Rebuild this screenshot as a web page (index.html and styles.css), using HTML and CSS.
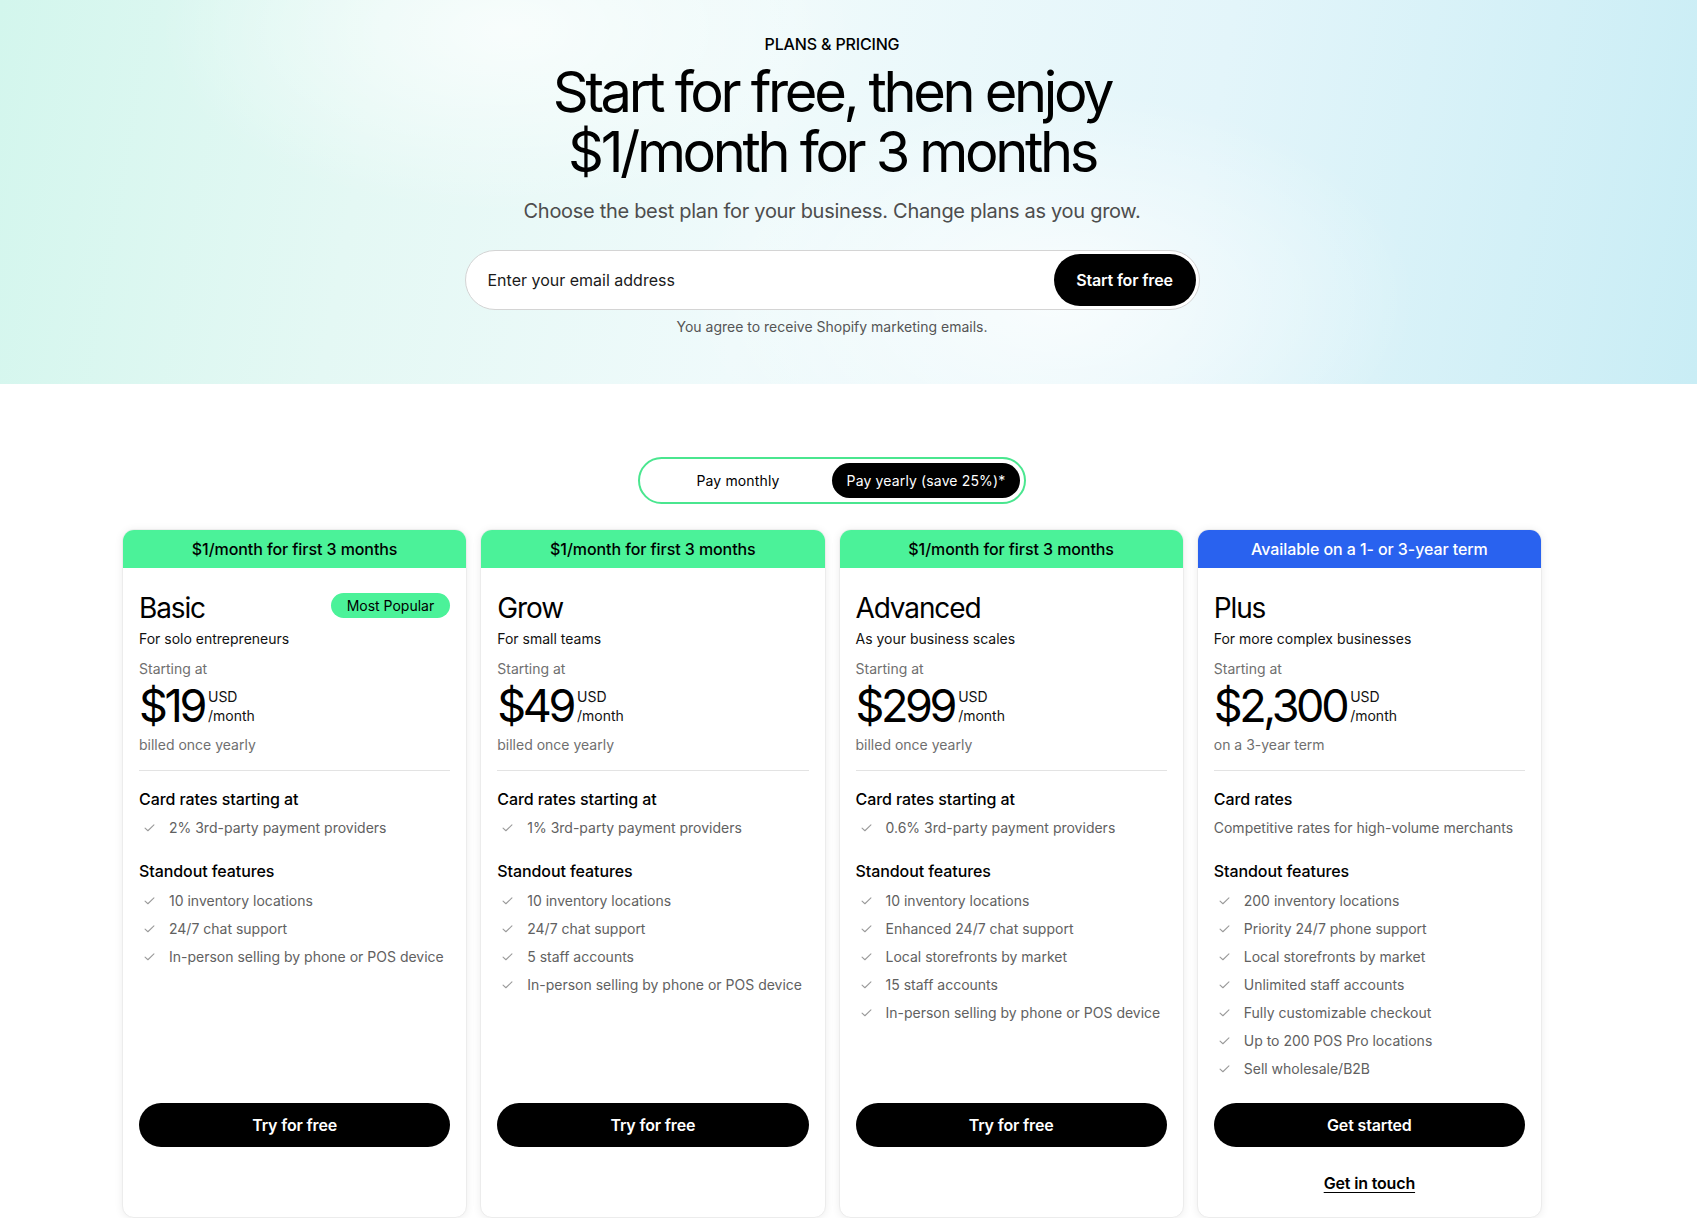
FILE: index.html
```html
<!DOCTYPE html>
<html lang="en">
<head>
<meta charset="utf-8">
<title>Plans &amp; Pricing</title>
<link rel="stylesheet" href="styles.css">
</head>
<body>
<header class="hero">
  <div class="hero-inner">
    <p class="eyebrow">PLANS &amp; PRICING</p>
    <h1 class="headline">Start for free, then enjoy<br>$1/month for 3 months</h1>
    <p class="lede">Choose the best plan for your business. Change plans as you grow.</p>
    <form class="signup">
      <input class="signup-input" type="email" placeholder="Enter your email address">
      <button class="signup-btn" type="button">Start for free</button>
    </form>
    <p class="consent">You agree to receive Shopify marketing emails.</p>
  </div>
</header>

<main class="plans">
  <div class="plans-inner">
    <div class="toggle">
      <span class="toggle-opt">Pay monthly</span>
      <span class="toggle-opt is-active">Pay yearly (save 25%)*</span>
    </div>

    <div class="cards">
      <article class="card">
        <div class="band">$1/month for first 3 months</div>
        <div class="card-body">
          <div class="title-row"><h2 class="plan-name">Basic</h2><span class="badge">Most Popular</span></div>
          <p class="plan-for">For solo entrepreneurs</p>
          <p class="muted">Starting at</p>
          <div class="price-row"><span class="price">$19</span><span class="unit"><span>USD</span><span>/month</span></span></div>
          <p class="muted billed">billed once yearly</p>
          <hr class="divider">
          <h3 class="sec">Card rates starting at</h3>
          <ul class="list">
            <li><svg class="chk" viewBox="0 0 12 9"><path d="M1 4.6 4.2 7.6 11 1"/></svg>2% 3rd-party payment providers</li>
          </ul>
          <h3 class="sec sec-2">Standout features</h3>
          <ul class="list">
            <li><svg class="chk" viewBox="0 0 12 9"><path d="M1 4.6 4.2 7.6 11 1"/></svg>10 inventory locations</li>
            <li><svg class="chk" viewBox="0 0 12 9"><path d="M1 4.6 4.2 7.6 11 1"/></svg>24/7 chat support</li>
            <li><svg class="chk" viewBox="0 0 12 9"><path d="M1 4.6 4.2 7.6 11 1"/></svg>In-person selling by phone or POS device</li>
          </ul>
          <div class="actions"><a class="cta" href="#">Try for free</a></div>
        </div>
      </article>

      <article class="card">
        <div class="band">$1/month for first 3 months</div>
        <div class="card-body">
          <div class="title-row"><h2 class="plan-name">Grow</h2></div>
          <p class="plan-for">For small teams</p>
          <p class="muted">Starting at</p>
          <div class="price-row"><span class="price">$49</span><span class="unit"><span>USD</span><span>/month</span></span></div>
          <p class="muted billed">billed once yearly</p>
          <hr class="divider">
          <h3 class="sec">Card rates starting at</h3>
          <ul class="list">
            <li><svg class="chk" viewBox="0 0 12 9"><path d="M1 4.6 4.2 7.6 11 1"/></svg>1% 3rd-party payment providers</li>
          </ul>
          <h3 class="sec sec-2">Standout features</h3>
          <ul class="list">
            <li><svg class="chk" viewBox="0 0 12 9"><path d="M1 4.6 4.2 7.6 11 1"/></svg>10 inventory locations</li>
            <li><svg class="chk" viewBox="0 0 12 9"><path d="M1 4.6 4.2 7.6 11 1"/></svg>24/7 chat support</li>
            <li><svg class="chk" viewBox="0 0 12 9"><path d="M1 4.6 4.2 7.6 11 1"/></svg>5 staff accounts</li>
            <li><svg class="chk" viewBox="0 0 12 9"><path d="M1 4.6 4.2 7.6 11 1"/></svg>In-person selling by phone or POS device</li>
          </ul>
          <div class="actions"><a class="cta" href="#">Try for free</a></div>
        </div>
      </article>

      <article class="card">
        <div class="band">$1/month for first 3 months</div>
        <div class="card-body">
          <div class="title-row"><h2 class="plan-name">Advanced</h2></div>
          <p class="plan-for">As your business scales</p>
          <p class="muted">Starting at</p>
          <div class="price-row"><span class="price">$299</span><span class="unit"><span>USD</span><span>/month</span></span></div>
          <p class="muted billed">billed once yearly</p>
          <hr class="divider">
          <h3 class="sec">Card rates starting at</h3>
          <ul class="list">
            <li><svg class="chk" viewBox="0 0 12 9"><path d="M1 4.6 4.2 7.6 11 1"/></svg>0.6% 3rd-party payment providers</li>
          </ul>
          <h3 class="sec sec-2">Standout features</h3>
          <ul class="list">
            <li><svg class="chk" viewBox="0 0 12 9"><path d="M1 4.6 4.2 7.6 11 1"/></svg>10 inventory locations</li>
            <li><svg class="chk" viewBox="0 0 12 9"><path d="M1 4.6 4.2 7.6 11 1"/></svg>Enhanced 24/7 chat support</li>
            <li><svg class="chk" viewBox="0 0 12 9"><path d="M1 4.6 4.2 7.6 11 1"/></svg>Local storefronts by market</li>
            <li><svg class="chk" viewBox="0 0 12 9"><path d="M1 4.6 4.2 7.6 11 1"/></svg>15 staff accounts</li>
            <li><svg class="chk" viewBox="0 0 12 9"><path d="M1 4.6 4.2 7.6 11 1"/></svg>In-person selling by phone or POS device</li>
          </ul>
          <div class="actions"><a class="cta" href="#">Try for free</a></div>
        </div>
      </article>

      <article class="card">
        <div class="band band-blue">Available on a 1- or 3-year term</div>
        <div class="card-body">
          <div class="title-row"><h2 class="plan-name">Plus</h2></div>
          <p class="plan-for">For more complex businesses</p>
          <p class="muted">Starting at</p>
          <div class="price-row"><span class="price">$2,300</span><span class="unit"><span>USD</span><span>/month</span></span></div>
          <p class="muted billed">on a 3-year term</p>
          <hr class="divider">
          <h3 class="sec">Card rates</h3>
          <p class="plain">Competitive rates for high-volume merchants</p>
          <h3 class="sec sec-2">Standout features</h3>
          <ul class="list">
            <li><svg class="chk" viewBox="0 0 12 9"><path d="M1 4.6 4.2 7.6 11 1"/></svg>200 inventory locations</li>
            <li><svg class="chk" viewBox="0 0 12 9"><path d="M1 4.6 4.2 7.6 11 1"/></svg>Priority 24/7 phone support</li>
            <li><svg class="chk" viewBox="0 0 12 9"><path d="M1 4.6 4.2 7.6 11 1"/></svg>Local storefronts by market</li>
            <li><svg class="chk" viewBox="0 0 12 9"><path d="M1 4.6 4.2 7.6 11 1"/></svg>Unlimited staff accounts</li>
            <li><svg class="chk" viewBox="0 0 12 9"><path d="M1 4.6 4.2 7.6 11 1"/></svg>Fully customizable checkout</li>
            <li><svg class="chk" viewBox="0 0 12 9"><path d="M1 4.6 4.2 7.6 11 1"/></svg>Up to 200 POS Pro locations</li>
            <li><svg class="chk" viewBox="0 0 12 9"><path d="M1 4.6 4.2 7.6 11 1"/></svg>Sell wholesale/B2B</li>
          </ul>
          <div class="actions"><a class="cta" href="#">Get started</a><a class="link" href="#">Get in touch</a></div>
        </div>
      </article>
    </div>
  </div>
</main>
</body>
</html>
```

FILE: styles.css
```css
* { box-sizing: border-box; }
html, body { margin: 0; padding: 0; }
body {
  font-family: Inter, "Noto Sans", "Liberation Sans", sans-serif;
  color: #000;
  background: #fff;
  overflow: hidden;
}
p, h1, h2, h3, ul { margin: 0; padding: 0; }

/* HERO */
.hero {
  height: 384px;
  background:
    radial-gradient(ellipse 520px 300px at 62% 78%, rgba(255,255,255,0.75), rgba(255,255,255,0) 70%),
    radial-gradient(ellipse 500px 260px at 30% 8%, rgba(255,255,255,0.7), rgba(255,255,255,0) 70%),
    linear-gradient(100deg, #d3f6ed 0%, #e4f8f4 22%, #effafb 45%, #e3f5fa 70%, #c9edf5 100%);
}
.hero-inner {
  width: 1664px;
  padding-top: 32px;
  display: flex;
  flex-direction: column;
  align-items: center;
  text-align: center;
}
.eyebrow {
  font-size: 16px;
  line-height: 24px;
  font-weight: 500;
  letter-spacing: -0.01em;
}
.headline {
  margin-top: 6px;
  font-size: 56px;
  line-height: 60px;
  font-weight: 400;
  letter-spacing: -0.06em;
}
.lede {
  margin-top: 15px;
  font-size: 20px;
  line-height: 28px;
  color: #4d4d4d;
  letter-spacing: -0.015em;
}
.signup {
  margin-top: 25px;
  width: 735px;
  height: 60px;
  background: #fff;
  border: 1px solid #d4d4d4;
  border-radius: 30px;
  display: flex;
  align-items: center;
  padding: 3px 3px 3px 22px;
}
.signup-input {
  flex: 1;
  border: 0;
  outline: 0;
  background: transparent;
  font-family: inherit;
  font-size: 16px;
  color: #1a1a1a;
  padding: 0;
}
.signup-input::placeholder { color: #1a1a1a; }
.signup-btn {
  width: 142px;
  height: 52px;
  border: 0;
  border-radius: 26px;
  background: #000;
  color: #fff;
  font-family: inherit;
  font-size: 16px;
  font-weight: 600;
  letter-spacing: -0.01em;
}
.consent {
  margin-top: 7px;
  font-size: 14px;
  line-height: 20px;
  color: #555;
}

/* PLANS */
.plans-inner {
  width: 1664px;
  display: flex;
  flex-direction: column;
  align-items: center;
  padding-top: 73px;
}
.toggle {
  display: flex;
  border: 2px solid #4ae68f;
  border-radius: 24px;
  padding: 4px;
  height: 47px;
}
.toggle-opt {
  width: 188px;
  height: 35px;
  border-radius: 18px;
  display: flex;
  align-items: center;
  justify-content: center;
  font-size: 14px;
  letter-spacing: 0.01em;
  color: #000;
}
.toggle-opt.is-active { background: #000; color: #fff; }

.cards {
  margin-top: 25px;
  width: 1420px;
  display: grid;
  grid-template-columns: repeat(4, 1fr);
  column-gap: 13px;
}
.card {
  height: 689px;
  border-radius: 12px;
  background: #fff;
  border: 1px solid #ececec;
  box-shadow: 0 1px 8px rgba(0,0,0,0.07);
  display: flex;
  flex-direction: column;
  overflow: hidden;
}
.band {
  height: 38px;
  flex: none;
  background: #4bf299;
  display: flex;
  align-items: center;
  justify-content: center;
  font-size: 16px;
  font-weight: 500;
  letter-spacing: -0.005em;
}
.band-blue { background: #2962ef; color: #fff; }
.card-body {
  flex: 1;
  padding: 22px 16px 0;
  display: flex;
  flex-direction: column;
}
.title-row {
  display: flex;
  justify-content: space-between;
  align-items: center;
  height: 36px;
}
.plan-name {
  font-size: 28px;
  line-height: 36px;
  font-weight: 400;
  letter-spacing: -0.04em;
}
.badge {
  background: #4bf299;
  border-radius: 13px;
  height: 25px;
  padding: 0 16px;
  display: flex;
  align-items: center;
  font-size: 14px;
  margin-top: -6px;
}
.plan-for {
  margin-top: 3px;
  font-size: 14px;
  line-height: 20px;
  color: #111;
}
.muted {
  margin-top: 10px;
  font-size: 14px;
  line-height: 20px;
  color: #6f6f6f;
}
.price-row {
  margin-top: 3px;
  display: flex;
  align-items: center;
  gap: 4px;
}
.price {
  font-size: 45px;
  line-height: 48px;
  letter-spacing: -0.075em;
  font-weight: 400;
}
.unit {
  display: flex;
  flex-direction: column;
  font-size: 14px;
  line-height: 19px;
  color: #111;
}
.billed { margin-top: 5px; }
.divider {
  margin: 15px 0 0;
  border: 0;
  border-top: 1px solid #e3e3e3;
}
.sec {
  margin-top: 16px;
  font-size: 16px;
  line-height: 24px;
  font-weight: 500;
  letter-spacing: -0.005em;
}
.sec-2 { margin-top: 21px; }
.list {
  list-style: none;
  margin-top: 7px;
  display: flex;
  flex-direction: column;
  gap: 8px;
}
.sec-2 + .list { margin-top: 8px; }
.list li {
  display: flex;
  align-items: center;
  font-size: 14px;
  line-height: 20px;
  color: #616161;
  padding-left: 5px;
}
.chk {
  width: 11px;
  height: 8px;
  margin-right: 14px;
  fill: none;
  stroke: #9a9a9a;
  stroke-width: 1.2;
  stroke-linecap: round;
  stroke-linejoin: round;
  flex: none;
}
.plain {
  margin-top: 7px;
  font-size: 14px;
  line-height: 20px;
  color: #616161;
}
.actions {
  margin-top: auto;
  display: flex;
  flex-direction: column;
  align-items: center;
  padding-bottom: 70px;
}
.card:last-child .actions { padding-bottom: 22px; }
.cta {
  width: 100%;
  height: 44px;
  border-radius: 22px;
  background: #000;
  color: #fff;
  display: flex;
  align-items: center;
  justify-content: center;
  font-size: 16px;
  font-weight: 600;
  text-decoration: none;
  letter-spacing: -0.01em;
}
.link {
  margin-top: 24px;
  font-size: 16px;
  line-height: 24px;
  font-weight: 600;
  color: #000;
  text-decoration: underline;
  text-underline-offset: 3px;
  letter-spacing: -0.01em;
}
```
